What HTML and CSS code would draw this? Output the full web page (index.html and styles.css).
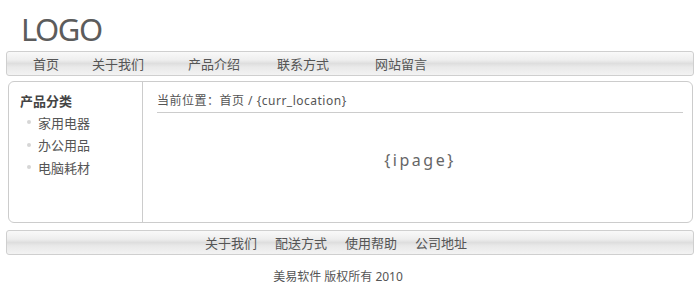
FILE: index.html
```html
<!DOCTYPE html>
<html>
<head>
    <meta charset="utf-8">
    <title>美易软件</title>
    <link rel="stylesheet" href="styles.css">
</head>
<body>
    <div class="page">
        <div class="top">
            <a href="#" class="logo">LOGO</a>
        </div>

        <ul class="nav">
            <li><a href="#">首页</a></li>
            <li><a href="#">关于我们</a></li>
            <li><a href="#">产品介绍</a></li>
            <li><a href="#">联系方式</a></li>
            <li><a href="#">网站留言</a></li>
        </ul>

        <div class="main">
            <div class="side">
                <h3>产品分类</h3>
                <ul>
                    <li><a href="#">家用电器</a></li>
                    <li><a href="#">办公用品</a></li>
                    <li><a href="#">电脑耗材</a></li>
                </ul>
            </div>
            <div class="content">
                <div class="crumb">当前位置：首页 / {curr_location}</div>
                <div class="ipage">{ipage}</div>
            </div>
        </div>

        <ul class="foot-nav">
            <li><a href="#">关于我们</a></li>
            <li><a href="#">配送方式</a></li>
            <li><a href="#">使用帮助</a></li>
            <li><a href="#">公司地址</a></li>
        </ul>

        <p class="copy">美易软件 版权所有 2010</p>
    </div>
</body>
</html>
```

FILE: styles.css
```css
* {
    margin: 0;
    padding: 0;
    box-sizing: border-box;
}

body {
    background: #fff;
    font-family: "Noto Sans", "Noto Sans CJK SC", sans-serif;
    font-size: 13px;
    color: #555;
}

a {
    color: #555;
    text-decoration: none;
}

ul {
    list-style: none;
}

.page {
    width: 700px;
    padding: 0 6px;
}

.top {
    height: 51px;
    padding: 9px 0 0 15px;
}

.logo {
    font-size: 31px;
    line-height: 40px;
    letter-spacing: -1.5px;
    color: #5c5c5c;
}

.nav,
.foot-nav {
    display: flex;
    align-items: center;
    height: 25px;
    border: 1px solid #cfcfcf;
    border-radius: 3px;
    background: linear-gradient(#f9f9f9 0%, #eeeeee 35%, #dedede 50%, #e9e9e9 65%, #f3f3f3 100%);
}

.nav li:nth-child(1) { margin-left: 26px; }
.nav li:nth-child(2) { margin-left: 33px; }
.nav li:nth-child(3) { margin-left: 44px; }
.nav li:nth-child(4) { margin-left: 37px; }
.nav li:nth-child(5) { margin-left: 46px; }

.main {
    display: flex;
    height: 142px;
    margin: 5px 1px 0 2px;
    border: 1px solid #cccccc;
    border-radius: 6px;
}

.side {
    width: 134px;
    border-right: 1px solid #cccccc;
    padding: 10px 0 0 11px;
}

.side h3 {
    font-size: 13px;
    font-weight: 700;
    color: #444;
    line-height: 18px;
    margin-bottom: 1px;
}

.side li {
    display: flex;
    align-items: center;
    height: 22.5px;
    padding-left: 7px;
}

.side li::before {
    content: "";
    width: 4px;
    height: 4px;
    border-radius: 50%;
    background: #d6d6d6;
    margin-right: 7px;
}

.content {
    flex: 1;
    padding: 10px 9px 0 14px;
}

.crumb {
    font-size: 12px;
    letter-spacing: 0.5px;
    line-height: 18px;
    padding-bottom: 2px;
    border-bottom: 1px solid #cccccc;
}

.ipage {
    text-align: center;
    font-size: 16px;
    letter-spacing: 2.5px;
    color: #666;
    padding-top: 36px;
}

.foot-nav {
    margin-top: 7px;
    justify-content: center;
    gap: 18px;
    padding-right: 28px;
}

.copy {
    text-align: center;
    font-size: 12px;
    padding: 13px 24px 0 0;
    line-height: 18px;
}
```
